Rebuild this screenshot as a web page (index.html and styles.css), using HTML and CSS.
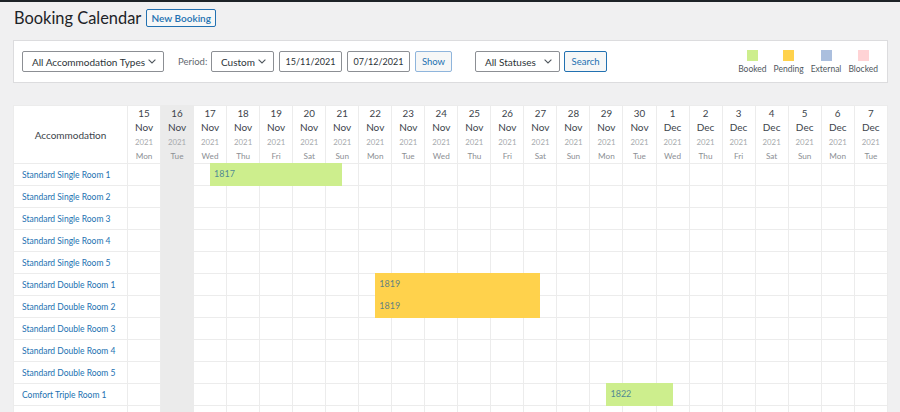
FILE: index.html
```html
<!DOCTYPE html>
<html>
<head>
<meta charset="utf-8">
<link rel="stylesheet" href="styles.css">
</head>
<body>
<div class="adminbar"></div>
<div class="wrap">
  <div class="title-row">
    <h1 class="title">Booking Calendar</h1>
    <a class="btn btn-new">New Booking</a>
  </div>

  <div class="filters">
    <div class="filters-left">
      <div class="select sel-type"><span>All Accommodation Types</span><svg width="8" height="5" viewBox="0 0 8 5"><polyline points="0.6,0.6 4,4 7.4,0.6" fill="none" stroke="#50575e" stroke-width="1.1"/></svg></div>
      <label class="lbl">Period:</label>
      <div class="select sel-period"><span>Custom</span><svg width="8" height="5" viewBox="0 0 8 5"><polyline points="0.6,0.6 4,4 7.4,0.6" fill="none" stroke="#50575e" stroke-width="1.1"/></svg></div>
      <div class="input">15/11/2021</div>
      <div class="input">07/12/2021</div>
      <a class="btn btn-show">Show</a>
      <div class="select sel-status"><span>All Statuses</span><svg width="8" height="5" viewBox="0 0 8 5"><polyline points="0.6,0.6 4,4 7.4,0.6" fill="none" stroke="#50575e" stroke-width="1.1"/></svg></div>
      <a class="btn btn-search">Search</a>
    </div>
    <div class="legend">
      <div class="leg"><i class="sw booked"></i><span>Booked</span></div>
      <div class="leg"><i class="sw pending"></i><span>Pending</span></div>
      <div class="leg"><i class="sw external"></i><span>External</span></div>
      <div class="leg"><i class="sw blocked"></i><span>Blocked</span></div>
    </div>
  </div>

  <table class="cal">
    <colgroup><col class="c-name"></colgroup>
    <thead>
      <tr>
        <th class="h-name">Accommodation</th>
        <th><b>15</b><em>Nov</em><s>2021</s><u>Mon</u></th>
        <th class="today"><b>16</b><em>Nov</em><s>2021</s><u>Tue</u></th>
        <th><b>17</b><em>Nov</em><s>2021</s><u>Wed</u></th>
        <th><b>18</b><em>Nov</em><s>2021</s><u>Thu</u></th>
        <th><b>19</b><em>Nov</em><s>2021</s><u>Fri</u></th>
        <th><b>20</b><em>Nov</em><s>2021</s><u>Sat</u></th>
        <th><b>21</b><em>Nov</em><s>2021</s><u>Sun</u></th>
        <th><b>22</b><em>Nov</em><s>2021</s><u>Mon</u></th>
        <th><b>23</b><em>Nov</em><s>2021</s><u>Tue</u></th>
        <th><b>24</b><em>Nov</em><s>2021</s><u>Wed</u></th>
        <th><b>25</b><em>Nov</em><s>2021</s><u>Thu</u></th>
        <th><b>26</b><em>Nov</em><s>2021</s><u>Fri</u></th>
        <th><b>27</b><em>Nov</em><s>2021</s><u>Sat</u></th>
        <th><b>28</b><em>Nov</em><s>2021</s><u>Sun</u></th>
        <th><b>29</b><em>Nov</em><s>2021</s><u>Mon</u></th>
        <th><b>30</b><em>Nov</em><s>2021</s><u>Tue</u></th>
        <th><b>1</b><em>Dec</em><s>2021</s><u>Wed</u></th>
        <th><b>2</b><em>Dec</em><s>2021</s><u>Thu</u></th>
        <th><b>3</b><em>Dec</em><s>2021</s><u>Fri</u></th>
        <th><b>4</b><em>Dec</em><s>2021</s><u>Sat</u></th>
        <th><b>5</b><em>Dec</em><s>2021</s><u>Sun</u></th>
        <th><b>6</b><em>Dec</em><s>2021</s><u>Mon</u></th>
        <th><b>7</b><em>Dec</em><s>2021</s><u>Tue</u></th>
      </tr>
    </thead>
    <tbody>
      <tr><td class="room"><a>Standard Single Room 1</a></td><td></td><td class="today"></td><td class="has"><div class="bar booked" style="--n:4">1817</div></td><td></td><td></td><td></td><td></td><td></td><td></td><td></td><td></td><td></td><td></td><td></td><td></td><td></td><td></td><td></td><td></td><td></td><td></td><td></td><td></td></tr>
      <tr><td class="room"><a>Standard Single Room 2</a></td><td></td><td class="today"></td><td></td><td></td><td></td><td></td><td></td><td></td><td></td><td></td><td></td><td></td><td></td><td></td><td></td><td></td><td></td><td></td><td></td><td></td><td></td><td></td><td></td></tr>
      <tr><td class="room"><a>Standard Single Room 3</a></td><td></td><td class="today"></td><td></td><td></td><td></td><td></td><td></td><td></td><td></td><td></td><td></td><td></td><td></td><td></td><td></td><td></td><td></td><td></td><td></td><td></td><td></td><td></td><td></td></tr>
      <tr><td class="room"><a>Standard Single Room 4</a></td><td></td><td class="today"></td><td></td><td></td><td></td><td></td><td></td><td></td><td></td><td></td><td></td><td></td><td></td><td></td><td></td><td></td><td></td><td></td><td></td><td></td><td></td><td></td><td></td></tr>
      <tr><td class="room"><a>Standard Single Room 5</a></td><td></td><td class="today"></td><td></td><td></td><td></td><td></td><td></td><td></td><td></td><td></td><td></td><td></td><td></td><td></td><td></td><td></td><td></td><td></td><td></td><td></td><td></td><td></td><td></td></tr>
      <tr><td class="room"><a>Standard Double Room 1</a></td><td></td><td class="today"></td><td></td><td></td><td></td><td></td><td></td><td class="has"><div class="bar pending" style="--n:5">1819</div></td><td></td><td></td><td></td><td></td><td></td><td></td><td></td><td></td><td></td><td></td><td></td><td></td><td></td><td></td><td></td></tr>
      <tr><td class="room"><a>Standard Double Room 2</a></td><td></td><td class="today"></td><td></td><td></td><td></td><td></td><td></td><td class="has"><div class="bar pending" style="--n:5">1819</div></td><td></td><td></td><td></td><td></td><td></td><td></td><td></td><td></td><td></td><td></td><td></td><td></td><td></td><td></td><td></td></tr>
      <tr><td class="room"><a>Standard Double Room 3</a></td><td></td><td class="today"></td><td></td><td></td><td></td><td></td><td></td><td></td><td></td><td></td><td></td><td></td><td></td><td></td><td></td><td></td><td></td><td></td><td></td><td></td><td></td><td></td><td></td></tr>
      <tr><td class="room"><a>Standard Double Room 4</a></td><td></td><td class="today"></td><td></td><td></td><td></td><td></td><td></td><td></td><td></td><td></td><td></td><td></td><td></td><td></td><td></td><td></td><td></td><td></td><td></td><td></td><td></td><td></td><td></td></tr>
      <tr><td class="room"><a>Standard Double Room 5</a></td><td></td><td class="today"></td><td></td><td></td><td></td><td></td><td></td><td></td><td></td><td></td><td></td><td></td><td></td><td></td><td></td><td></td><td></td><td></td><td></td><td></td><td></td><td></td><td></td></tr>
      <tr><td class="room"><a>Comfort Triple Room 1</a></td><td></td><td class="today"></td><td></td><td></td><td></td><td></td><td></td><td></td><td></td><td></td><td></td><td></td><td></td><td></td><td class="has"><div class="bar booked" style="--n:2">1822</div></td><td></td><td></td><td></td><td></td><td></td><td></td><td></td><td></td></tr>
      <tr class="row-last"><td class="room"></td><td></td><td class="today"></td><td></td><td></td><td></td><td></td><td></td><td></td><td></td><td></td><td></td><td></td><td></td><td></td><td></td><td></td><td></td><td></td><td></td><td></td><td></td><td></td><td></td></tr>
    </tbody>
  </table>
</div>
</body>
</html>
```
FILE: styles.css
```css
html, body {
  margin: 0;
  padding: 0;
  background: #f0f0f1;
  overflow: hidden;
  font-family: Lato, "Open Sans", sans-serif;
  color: #3c434a;
}

.adminbar {
  height: 2px;
  background: #1d2327;
}

.wrap {
  padding: 6px 12px 0 13px;
}

.title-row {
  display: flex;
  align-items: center;
  gap: 5px;
  height: 19px;
}

.title {
  margin: 0 0 0 1px;
  font-size: 16.4px;
  font-weight: 400;
  color: #1d2327;
  line-height: 19px;
}

.btn {
  display: inline-flex;
  align-items: center;
  justify-content: center;
  box-sizing: border-box;
  height: 18px;
  padding: 0 4px;
  border: 1px solid #2271b1;
  border-radius: 2px;
  background: #f6f7f7;
  color: #2271b1;
  font-size: 9.5px;
  white-space: nowrap;
}

.btn-new {
  width: 70px;
  font-weight: 600;
  font-size: 10px;
}

.filters {
  margin-top: 13px;
  height: 43px;
  box-sizing: border-box;
  background: #fff;
  border: 1px solid #dcdcde;
  display: flex;
  align-items: center;
  justify-content: space-between;
  padding: 0 9px 0 8px;
}

.filters-left {
  display: flex;
  align-items: center;
}

.select, .input {
  box-sizing: border-box;
  height: 21px;
  border: 1px solid #8c8f94;
  border-radius: 2px;
  background: #fff;
  color: #2c3338;
  font-size: 10px;
  display: flex;
  align-items: center;
  white-space: nowrap;
}

.select {
  justify-content: space-between;
  padding: 0 7px 0 9px;
}

.sel-type { width: 142px; }
.sel-period { width: 63px; margin-right: 5px; }
.sel-status { width: 85px; margin-left: 23px; margin-right: 4px; }

.lbl {
  font-size: 9.5px;
  color: #646970;
  margin: 0 4px 0 14px;
  width: 29px;
}

.input {
  width: 63px;
  justify-content: center;
  margin-right: 5px;
  font-size: 9px;
}

.btn-show {
  width: 37px;
  height: 21px;
  border-color: #8fb5dc;
}

.btn-search {
  width: 43px;
  height: 21px;
}

.legend {
  display: flex;
  gap: 7px;
  align-self: stretch;
  padding-top: 9px;
}

.leg {
  display: flex;
  flex-direction: column;
  align-items: center;
  font-size: 8.5px;
  color: #50575e;
}

.leg span { margin-top: 3px; }

.sw {
  width: 11px;
  height: 11px;
  display: block;
}
.sw.booked { background: #cdee8d; }
.sw.pending { background: #ffd24c; }
.sw.external { background: #abbfde; }
.sw.blocked { background: #ffd3d5; }

.cal {
  margin-top: 22px;
  width: 875px;
  table-layout: fixed;
  border-collapse: collapse;
  background: #fff;
}

.cal .c-name { width: 114px; }

.cal th, .cal td {
  border: 1px solid #ececec;
  padding: 0;
}

.cal th {
  height: 57px;
  font-weight: 400;
  text-align: center;
  vertical-align: top;
}

.cal th.h-name {
  vertical-align: middle;
  font-size: 10px;
  color: #3c434a;
}

.cal th b, .cal th em, .cal th s, .cal th u {
  display: block;
  font-style: normal;
  text-decoration: none;
  font-weight: 400;
}

.cal th b { font-size: 9.8px; line-height: 14px; color: #3c434a; }
.cal th em { font-size: 10px; line-height: 15px; color: #3c434a; }
.cal th s { font-size: 7.8px; line-height: 14px; color: #a7aaad; }
.cal th u { font-size: 8.2px; line-height: 14px; color: #8c8f94; }

.cal td {
  height: 21px;
}

.cal .today {
  background: #ebebeb;
  border-color: #ebebeb;
}

.cal td.room {
  padding-left: 8px;
  font-size: 8.5px;
  white-space: nowrap;
  overflow: hidden;
}

.cal td.room a {
  color: #2271b1;
}

.cal td.has {
  position: relative;
}

.bar {
  position: absolute;
  left: 50%;
  top: -1px;
  height: 23px;
  width: calc(var(--n) * (100% + 1px));
  z-index: 1;
  box-sizing: border-box;
  padding: 0 4px 2px;
  display: flex;
  align-items: center;
  font-size: 9px;
  color: rgba(25, 95, 150, 0.72);
}

.bar.booked { background: #cdee8d; }
.bar.pending { background: #ffd24c; }
```
